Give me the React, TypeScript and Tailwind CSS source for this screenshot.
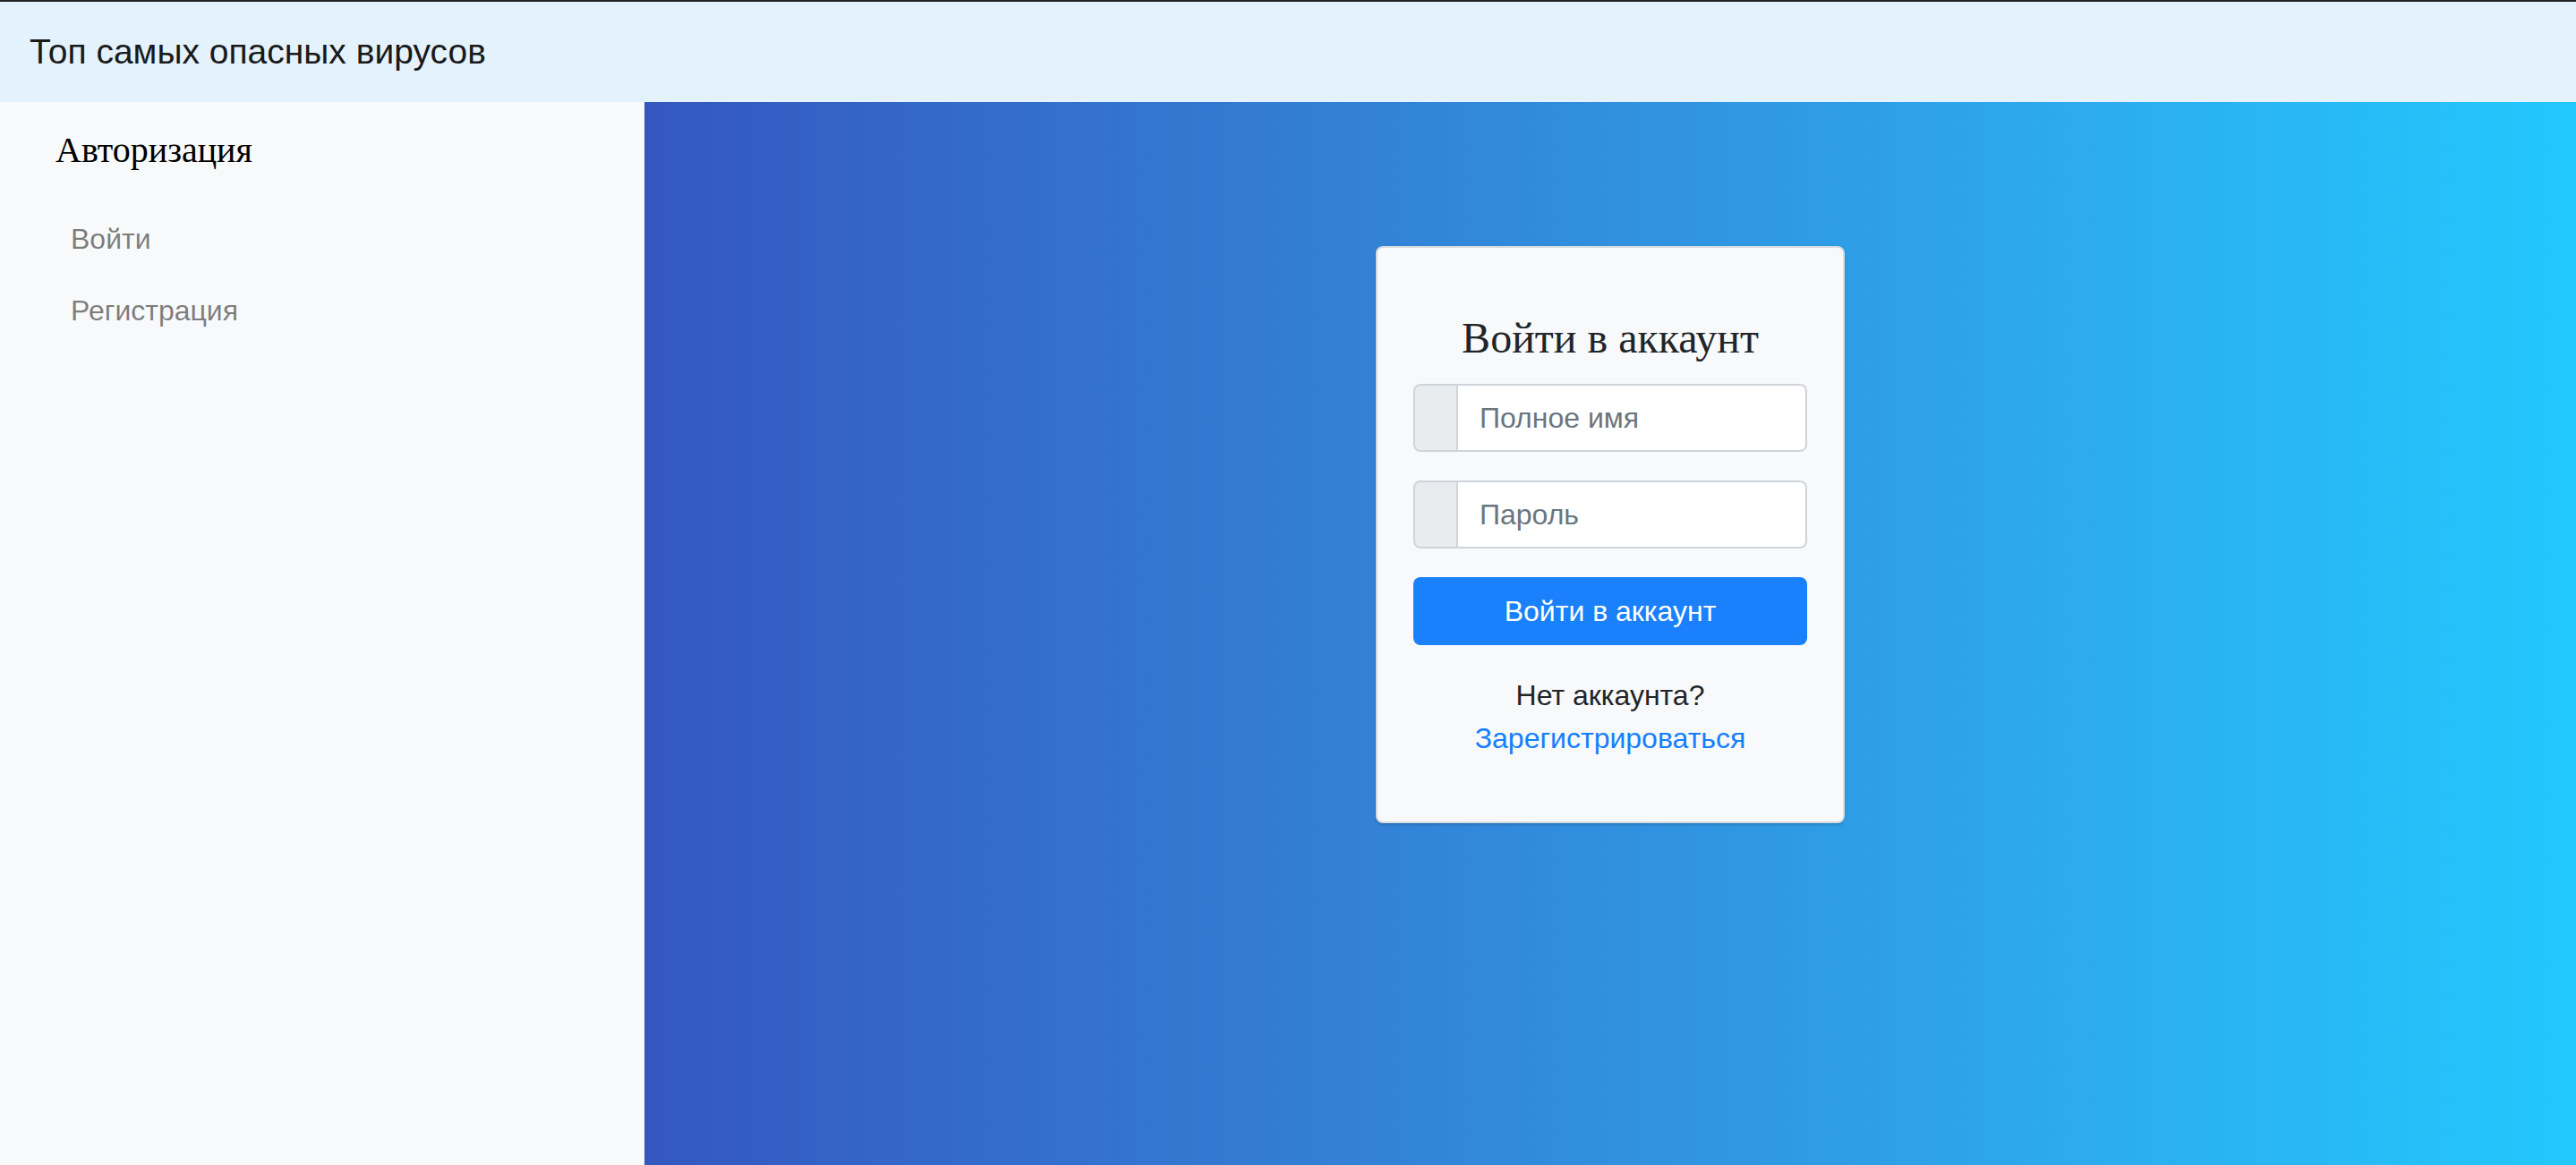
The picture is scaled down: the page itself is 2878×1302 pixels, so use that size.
import React from 'react';

const sans = "font-['Liberation_Sans',Arial,sans-serif]";
const serif = "font-['Liberation_Serif','Times_New_Roman',serif]";

const Sidebar: React.FC = () => {
  return (
    <aside className="w-[720px] shrink-0 bg-[#f8f9fa] pt-[30px] pl-[62px]">
      <h5 className={`${serif} text-[40px] leading-[48px] text-black`}>Авторизация</h5>
      <nav className={`${sans} mt-[35px] flex flex-col pl-[17px]`}>
        <a href="#" className="py-[16px] text-[32px] leading-[48px] text-[rgba(0,0,0,0.5)]">
          Войти
        </a>
        <a href="#" className="py-[16px] text-[32px] leading-[48px] text-[rgba(0,0,0,0.5)]">
          Регистрация
        </a>
      </nav>
    </aside>
  );
};

const InputRow: React.FC<{ placeholder: string; type?: string }> = ({ placeholder, type = 'text' }) => (
  <div className="flex h-[76px]">
    <span className="w-[50px] shrink-0 rounded-l-[8px] border-2 border-[#ced4da] bg-[#e9ecef]" />
    <input
      type={type}
      placeholder={placeholder}
      className={`${sans} min-w-0 flex-1 rounded-r-[8px] border-2 border-l-0 border-[#ced4da] bg-white pl-[24px] text-[32px] text-[#495057] outline-none placeholder:text-[#6c757d]`}
    />
  </div>
);

const LoginCard: React.FC = () => {
  return (
    <div className="w-[524px] rounded-[8px] border-2 border-[#d9dcdf] bg-[#f8f9fa] px-[40px] pb-[69px] pt-[72px] shadow-[0_2px_3px_rgba(0,0,0,0.15)]">
      <h4 className={`${serif} mb-[22px] text-center text-[48px] leading-[57.6px] text-[#212529]`}>
        Войти в аккаунт
      </h4>
      <div className="flex flex-col gap-[32px]">
        <InputRow placeholder="Полное имя" />
        <InputRow placeholder="Пароль" type="password" />
        <button
          className={`${sans} h-[76px] w-full rounded-[8px] bg-[#1a80fb] text-[32px] text-white`}
        >
          Войти в аккаунт
        </button>
      </div>
      <div className={`${sans} mt-[32px] text-center text-[32px] leading-[48px]`}>
        <p className="text-[#212529]">Нет аккаунта?</p>
        <a href="#" className="text-[#1580fb]">
          Зарегистрироваться
        </a>
      </div>
    </div>
  );
};

export default function App() {
  return (
    <div className="flex h-screen flex-col overflow-hidden">
      <header className="flex h-[114px] shrink-0 items-center border-t-2 border-[#222325] bg-[#e3f2fd] pl-[33px]">
        <span className={`${sans} text-[39px] leading-[60px] text-[#1a1a1a]`}>Топ самых опасных вирусов</span>
      </header>
      <div className="flex flex-1">
        <Sidebar />
        <main className="flex flex-1 justify-center bg-linear-to-r from-[#3457bf] to-[#22c8fd] pt-[161px]">
          <div>
            <LoginCard />
          </div>
        </main>
      </div>
    </div>
  );
}
